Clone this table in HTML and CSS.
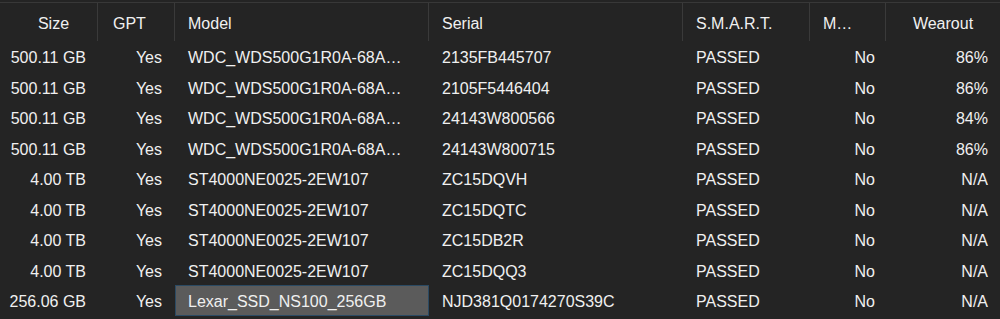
FILE: index.html
```html
<!DOCTYPE html>
<html lang="en">
<head>
    <meta charset="UTF-8">
    <meta name="viewport" content="width=device-width, initial-scale=1.0">
    <title>Disks</title>
    <link rel="stylesheet" href="styles.css">
</head>
<body>

    <div class="disk-grid">
        <table>
            <colgroup>
                <col class="c-size">
                <col class="c-gpt">
                <col class="c-model">
                <col class="c-serial">
                <col class="c-smart">
                <col class="c-mounted">
                <col class="c-wear">
            </colgroup>
            <thead>
                <tr>
                    <th class="h-size">Size</th>
                    <th class="h-gpt">GPT</th>
                    <th>Model</th>
                    <th>Serial</th>
                    <th>S.M.A.R.T.</th>
                    <th>M…</th>
                    <th class="h-wear">Wearout</th>
                </tr>
            </thead>
            <tbody>
                <tr>
                    <td class="size">500.11 GB</td><td class="gpt">Yes</td>
                    <td>WDC_WDS500G1R0A-68A…</td><td>2135FB445707</td>
                    <td>PASSED</td><td class="mounted">No</td><td class="wear">86%</td>
                </tr>
                <tr>
                    <td class="size">500.11 GB</td><td class="gpt">Yes</td>
                    <td>WDC_WDS500G1R0A-68A…</td><td>2105F5446404</td>
                    <td>PASSED</td><td class="mounted">No</td><td class="wear">86%</td>
                </tr>
                <tr>
                    <td class="size">500.11 GB</td><td class="gpt">Yes</td>
                    <td>WDC_WDS500G1R0A-68A…</td><td>24143W800566</td>
                    <td>PASSED</td><td class="mounted">No</td><td class="wear">84%</td>
                </tr>
                <tr>
                    <td class="size">500.11 GB</td><td class="gpt">Yes</td>
                    <td>WDC_WDS500G1R0A-68A…</td><td>24143W800715</td>
                    <td>PASSED</td><td class="mounted">No</td><td class="wear">86%</td>
                </tr>
                <tr>
                    <td class="size">4.00 TB</td><td class="gpt">Yes</td>
                    <td>ST4000NE0025-2EW107</td><td>ZC15DQVH</td>
                    <td>PASSED</td><td class="mounted">No</td><td class="wear">N/A</td>
                </tr>
                <tr>
                    <td class="size">4.00 TB</td><td class="gpt">Yes</td>
                    <td>ST4000NE0025-2EW107</td><td>ZC15DQTC</td>
                    <td>PASSED</td><td class="mounted">No</td><td class="wear">N/A</td>
                </tr>
                <tr>
                    <td class="size">4.00 TB</td><td class="gpt">Yes</td>
                    <td>ST4000NE0025-2EW107</td><td>ZC15DB2R</td>
                    <td>PASSED</td><td class="mounted">No</td><td class="wear">N/A</td>
                </tr>
                <tr>
                    <td class="size">4.00 TB</td><td class="gpt">Yes</td>
                    <td>ST4000NE0025-2EW107</td><td>ZC15DQQ3</td>
                    <td>PASSED</td><td class="mounted">No</td><td class="wear">N/A</td>
                </tr>
                <tr>
                    <td class="size">256.06 GB</td><td class="gpt">Yes</td>
                    <td class="selected">Lexar_SSD_NS100_256GB</td><td>NJD381Q0174270S39C</td>
                    <td>PASSED</td><td class="mounted">No</td><td class="wear">N/A</td>
                </tr>
            </tbody>
        </table>
    </div>

</body>
</html>
```

FILE: styles.css
```css
/* Disk list grid, dark theme */
body {
    margin: 0;
    background-color: #242424;
    font-family: "Liberation Sans", Arial, sans-serif;
    font-size: 16px;
    color: #f0f0f0;
    overflow: hidden;
}

.disk-grid {
    padding-top: 2px;
}

.disk-grid table {
    width: 1000px;
    table-layout: fixed;
    border-collapse: separate;
    border-spacing: 0;
    border-top: 1px solid #383838;
}

.c-size { width: 98px; }
.c-gpt { width: 77px; }
.c-model { width: 254px; }
.c-serial { width: 254px; }
.c-smart { width: 127px; }
.c-mounted { width: 76px; }
.c-wear { width: 114px; }

.disk-grid thead tr {
    height: 38px;
}

.disk-grid tbody tr {
    height: 30.5px;
}

.disk-grid th {
    padding: 4px 13px 0;
    font-weight: normal;
    text-align: left;
    border-right: 1px solid #3a3a3a;
    white-space: nowrap;
    overflow: hidden;
}

.disk-grid th:last-child {
    border-right: none;
}

.disk-grid th.h-size {
    text-align: center;
    padding-left: 10px;
    padding-right: 0;
}

.disk-grid th.h-gpt {
    padding-left: 15px;
}

.disk-grid th.h-wear {
    text-align: center;
    padding-left: 0;
    padding-right: 0;
}

.disk-grid td {
    padding: 4px 13px 0;
    white-space: nowrap;
    overflow: hidden;
    text-overflow: ellipsis;
}

.disk-grid td.size {
    text-align: right;
    padding-left: 0;
    padding-right: 12px;
    text-overflow: clip;
}

.disk-grid td.gpt {
    text-align: right;
}

.disk-grid td.mounted {
    text-align: right;
    padding-right: 11px;
}

.disk-grid td.wear {
    text-align: right;
    padding-right: 12px;
}

.disk-grid td.selected {
    background-color: #5b5b5b;
    box-shadow: inset 0 0 0 1px #2b4a63;
}
```
